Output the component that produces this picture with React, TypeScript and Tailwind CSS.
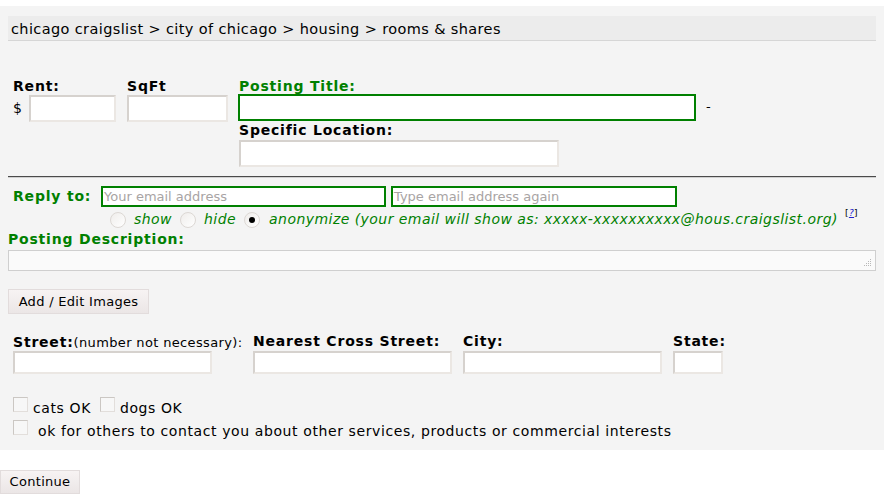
import React from "react";

const font = { fontFamily: '"DejaVu Sans", "Liberation Sans", sans-serif' };

function TextBox({ w, h = 27, green = false, placeholder = "" }: { w: number; h?: number; green?: boolean; placeholder?: string }) {
  return (
    <div
      className={
        "flex shrink-0 items-center bg-white text-[13px] text-[#a8a4a4] " +
        (green ? "border-2 border-[#008000]" : "border-2 border-t-[#d6d2ce] border-l-[#d6d2ce] border-b-[#ebe7e3] border-r-[#ebe7e3]")
      }
      style={{ width: w, height: h }}
    >
      {placeholder && <span className="pl-[1px] leading-none">{placeholder}</span>}
    </div>
  );
}

function Radio({ checked = false }: { checked?: boolean }) {
  return (
    <span className="inline-flex shrink-0 h-[16px] w-[16px] items-center justify-center rounded-full border border-[#dcd8d4] bg-gradient-to-br from-[#efedeb] to-white">
      {checked && <span className="h-[6px] w-[6px] rounded-full bg-black" />}
    </span>
  );
}

function Check() {
  return <span className="block shrink-0 h-[15px] w-[15px] border border-t-[#cbc7c3] border-l-[#cbc7c3] border-b-[#e2dedb] border-r-[#e2dedb] bg-[#f7f7f7]" />;
}

export default function App() {
  return (
    <div className="w-[884px] h-[496px] bg-white" style={font}>
      <div className="h-[6px]" />
      <div className="bg-[#f4f4f4] h-[444px] pt-[10px] px-[8px]">
        {/* breadcrumb */}
        <div className="h-[25px] bg-[#ececec] border-b border-[#d6d6d6] flex items-center pl-[3px] pt-[3px] text-[14.5px] tracking-[0.38px] text-black w-[868px]">
          chicago craigslist &gt; city of chicago &gt; housing &gt; rooms &amp; shares
        </div>

        {/* top row */}
        <div className="flex mt-[36px] pl-[5px]">
          <div className="flex flex-col w-[114px]">
            <div className="text-[14px] font-bold tracking-[0.8px] leading-[17px] h-[18px] mt-[1px]">Rent:</div>
            <div className="flex items-center -mt-[1px]">
              <span className="text-[14px] w-[16px]">$</span>
              <TextBox w={87} />
            </div>
          </div>
          <div className="flex flex-col w-[111px]">
            <div className="text-[14px] font-bold tracking-[0.8px] leading-[17px] h-[18px] mt-[1px]">SqFt</div>
            <div className="-mt-[1px]">
              <TextBox w={101} />
            </div>
          </div>
          <div className="flex flex-col">
            <div className="text-[14px] font-bold tracking-[0.8px] leading-[17px] h-[17px] text-[#008000] pl-[1px] mt-[1px]">Posting Title:</div>
            <div className="flex items-center -mt-[1px]">
              <TextBox w={458} green />
              <span className="ml-[10px] text-[13px] -mt-[2px]">-</span>
            </div>
            <div className="text-[14px] font-bold tracking-[0.8px] leading-[17px] h-[18px] pl-[1px] mt-[1px]">Specific Location:</div>
            <div className="pl-[1px]">
              <TextBox w={320} />
            </div>
          </div>
        </div>

        {/* hr */}
        <div className="mt-[9px] h-[2px] w-[868px] border-t border-[#4a4a4a] border-b border-b-[#d0d0d0]" />

        {/* reply to */}
        <div className="flex items-center mt-[8px] pl-[5px]">
          <span className="text-[14px] font-bold tracking-[0.8px] text-[#008000] w-[88px]">Reply to:</span>
          <TextBox w={285} h={21} green placeholder="Your email address" />
          <span className="w-[5px]" />
          <TextBox w={286} h={21} green placeholder="Type email address again" />
        </div>
        <div className="flex items-center mt-[4px] pl-[102px] text-[14px] italic text-[#008000] h-[17px] tracking-[0.45px] whitespace-nowrap">
          <Radio />
          <span className="ml-[8px]">show</span>
          <span className="ml-[8px] flex"><Radio /></span>
          <span className="ml-[8px]">hide</span>
          <span className="ml-[8px] flex"><Radio checked /></span>
          <span className="ml-[9px]">anonymize (your email will show as: xxxxx-xxxxxxxxxx@hous.craigslist.org)</span>
          <span className="ml-[7px] -mt-[12px] text-[9px] not-italic text-black">
            [<span className="text-[#2222cc] underline italic">?</span>]
          </span>
        </div>
        <div className="text-[14px] font-bold tracking-[0.8px] leading-[17px] text-[#008000] mt-[3px]">Posting Description:</div>
        <div className="relative mt-[2px] h-[21px] w-[868px] border border-[#cfcfcf] bg-[#fafafa]">
          <svg className="absolute right-[3px] bottom-[3px]" width="9" height="9" viewBox="0 0 9 9">
            <g fill="#b8b8b8">
              <rect x="7" y="1" width="1" height="1" />
              <rect x="5" y="3" width="1" height="1" />
              <rect x="7" y="3" width="1" height="1" />
              <rect x="3" y="5" width="1" height="1" />
              <rect x="5" y="5" width="1" height="1" />
              <rect x="7" y="5" width="1" height="1" />
              <rect x="1" y="7" width="1" height="1" />
              <rect x="3" y="7" width="1" height="1" />
              <rect x="5" y="7" width="1" height="1" />
              <rect x="7" y="7" width="1" height="1" />
            </g>
          </svg>
        </div>

        <div className="mt-[18px] h-[25px] w-[141px] flex items-center justify-center border border-[#e2dcdc] bg-gradient-to-b from-[#f7f3f3] to-[#ebe6e6] text-[13px] text-black tracking-[0.3px]">
          Add / Edit Images
        </div>

        {/* address row */}
        <div className="flex mt-[19px] pl-[5px]">
          <div className="flex flex-col w-[240px]">
            <div className="h-[18px] leading-[17px] whitespace-nowrap">
              <span className="text-[14px] font-bold tracking-[0.8px]">Street:</span>
              <span className="text-[13px] tracking-[0.35px]">(number not necessary):</span>
            </div>
            <TextBox w={199} h={23} />
          </div>
          <div className="flex flex-col w-[210px]">
            <div className="h-[18px] leading-[17px] text-[14px] font-bold tracking-[0.8px] whitespace-nowrap">Nearest Cross Street:</div>
            <TextBox w={199} h={23} />
          </div>
          <div className="flex flex-col w-[210px]">
            <div className="h-[18px] leading-[17px] text-[14px] font-bold tracking-[0.8px]">City:</div>
            <TextBox w={199} h={23} />
          </div>
          <div className="flex flex-col">
            <div className="h-[18px] leading-[17px] text-[14px] font-bold tracking-[0.8px]">State:</div>
            <TextBox w={50} h={23} />
          </div>
        </div>

        <div className="flex items-start mt-[23px] pl-[5px] text-[14px] tracking-[0.6px]">
          <Check />
          <span className="ml-[5px] leading-[17px] mt-[3px]">cats OK</span>
          <span className="ml-[9px]"><Check /></span>
          <span className="ml-[5px] leading-[17px] mt-[3px]">dogs OK</span>
        </div>
        <div className="flex items-start mt-[3px] pl-[5px] text-[14px] tracking-[0.6px]">
          <Check />
          <span className="ml-[10px] leading-[17px] mt-[3px]">ok for others to contact you about other services, products or commercial interests</span>
        </div>
      </div>
      <div className="mt-[20px] h-[24px] w-[80px] flex items-center justify-center border border-[#e2dcdc] bg-gradient-to-b from-[#f7f3f3] to-[#ebe6e6] text-[13px] tracking-[0.3px]">
        Continue
      </div>
    </div>
  );
}
